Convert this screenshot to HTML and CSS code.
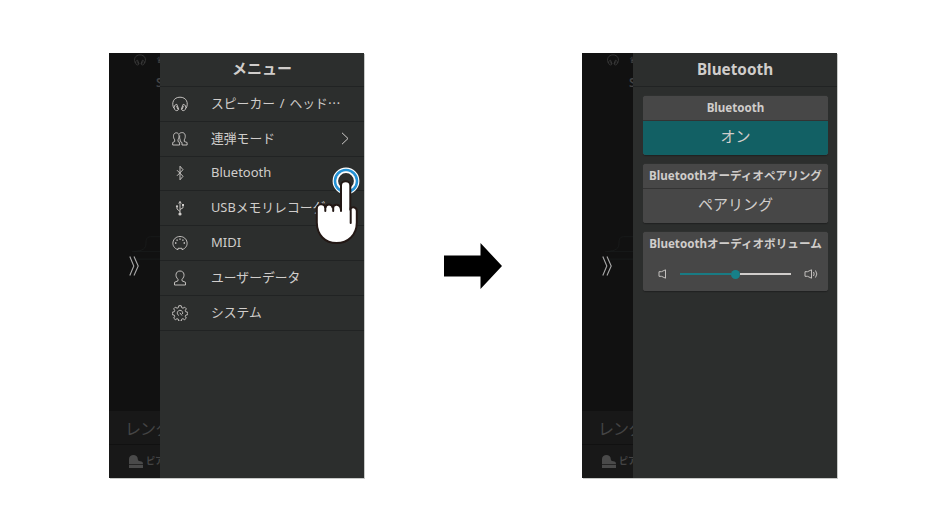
FILE: index.html
```html
<!DOCTYPE html>
<html lang="ja">
<head>
<meta charset="utf-8">
<title>Bluetooth</title>
<link rel="stylesheet" href="styles.css">
</head>
<body>
<svg class="defs" width="0" height="0">
  <symbol id="headphones" viewBox="0 0 16 16"><path d="M1.800 12.200C-.8 7 1.500 1.200 8 1.200S16.800 7 14.200 12.200M2.600 13.300C1.500 11 2.600 8.500 4.800 8.300L6.700 13.200C6 15 3.500 15.200 2.600 13.300ZM4.600 10l1.300 3.300M13.400 13.300C14.500 11 13.400 8.500 11.200 8.300L9.300 13.200C10 15 12.500 15.200 13.400 13.300ZM11.400 10l-1.300 3.300"/></symbol>
  <symbol id="piano" viewBox="0 0 14 13"><path d="M0 9V4C0-1.300 8.800-1.300 8.800 4c0 1.800 1 2.200 2.500 2.200 1.800 0 2.700 1 2.700 2.800Z M0 9.700h14V13H0Z"/></symbol>
  <symbol id="dock" viewBox="0 0 52 30"><path d="M20 20c12-1 15-4 15-10 0-5 1-8 6-8h11M18 20h34M22 29h30"/></symbol>
  <symbol id="chevrons" viewBox="0 0 10 20"><path d="m.8.500 4 9.500-4 9.500M5 .5 9.200 10 5 19.500"/></symbol>
</svg>
<main class="stage">
  <section class="phone">
    <div class="backdrop">
      <div class="status"><svg class="line s12"><use href="#headphones"/></svg><span class="pair">♛</span></div>
      <div class="song">S</div>
      <svg class="dock"><use href="#dock"/></svg>
      <svg class="chevrons"><use href="#chevrons"/></svg>
      <div class="lesson">レンタ</div>
      <div class="voice"><svg class="piano"><use href="#piano"/></svg><span>ピア</span></div>
    </div>
    <div class="drawer">
      <h1 class="title">メニュー</h1>
      <ul class="menu">
        <li><svg class="line icon"><use href="#headphones"/></svg><span class="wide">スピーカー / ヘッド⋯</span></li>
        <li><svg class="line icon" viewBox="0 0 16 16"><path d="M.7 14v-2.500l2-1V8.800C.8 6.500 1 1.800 4.300 1.800S7.500 6 6 8.800v1.700l1.600 1V14ZM7.300 2.800C8.300 1.800 9 1.600 10.300 1.600c3.200 0 3.700 4.400 2 7.200v1.700l2.800 1V14H10v-2.500l-1.800-1V8.800C7.500 7.500 7.500 6 7.800 4.500"/></svg><span>連弾モード</span><svg class="next" viewBox="0 0 8 13"><path d="m1 .8 6 5.700-6 5.700"/></svg></li>
        <li><svg class="line icon" viewBox="0 0 16 16"><path d="M5 5.200 11 11.300 8 14.800V1.200l3 3.500L5 10.800"/></svg><span class="latin">Bluetooth</span></li>
        <li><svg class="line icon" viewBox="0 0 16 16"><path d="M8 13V1.500M6.700 3.500 8 1.500l1.300 2M8 11.500 5 9V6.500M8 9.500l3-1.700V5"/><circle class="solid" cx="8" cy="14" r="1.600"/><circle class="solid" cx="5" cy="6.300" r="1.100"/><path class="solid" d="M10 4h2v2h-2Z"/></svg><span>USBメモリレコーダー</span></li>
        <li><svg class="line icon" viewBox="0 0 16 16"><path d="M6 14.700C-2.200 12 .2 1.500 8 1.500s10.200 10.500 2 13.200v-1.400H6Z"/><path class="solid" d="M3 7.300h1.400v1.400H3ZM4.400 4.400h1.400v1.400H4.400ZM7.300 3.400h1.400v1.400H7.300ZM10.200 4.400h1.400v1.400h-1.400ZM11.600 7.300H13v1.400h-1.400Z"/></svg><span class="latin">MIDI</span></li>
        <li><svg class="line icon" viewBox="0 0 16 16"><path d="M2.500 15v-2.700L6 10.800V9.300C2.700 6.500 3.500 1 8 1s5.300 5.500 2 8.300v1.500l3.500 1.500V15Z"/></svg><span>ユーザーデータ</span></li>
        <li><svg class="line icon" viewBox="0 0 16 16"><path d="m6.800.7 2.400 0 .5 2 1.300.5 1.700-1 1.600 1.600-1 1.800.5 1.200 2 .5v2.300l-2 .5-.5 1.300 1 1.700-1.600 1.600-1.800-1-1.200.5-.5 2H6.800l-.5-2-1.300-.5-1.700 1-1.600-1.600 1-1.800-.5-1.200-2-.5V7.300l2-.5.500-1.300-1-1.700 1.600-1.600 1.800 1 1.200-.5Z"/><path d="M6.800 10.500C4 8.800 5.500 5.300 8 5.300c2 0 3.200 1.900 2.500 3.700M7.800 7.800l2.200 2.700"/></svg><span>システム</span></li>
      </ul>
    </div>
    <svg class="tap" viewBox="0 0 46 80">
      <circle cx="31" cy="16" r="11.500" fill="none" stroke="#fff" stroke-width="3.800"/>
      <circle cx="31" cy="16" r="11" fill="none" stroke="#2492d5" stroke-width="2.600"/>
      <circle cx="31" cy="16" r="8.800" fill="none" stroke="#fff" stroke-width="1.800"/>
      <path d="M26 45V20.500c0-5.700 9.300-5.700 9.300 0v23c2.500-2.200 6.500-1.500 6.500 2.500v11.500C41.800 70 33 78 21.500 78S2 70 1.800 57.500V44c0-6 8-6 8.500-1 .5-4.500 6.700-4.800 7.500 0 .8-4.700 7.500-4.800 8.200 2Z" fill="#fff" stroke="#231815" stroke-width="2"/>
      <path d="M10.300 42v4M18.200 42v4M26 42v4M35.700 43v15" fill="none" stroke="#231815" stroke-width="2" stroke-linecap="round"/>
    </svg>
  </section>
  <svg class="arrow" viewBox="0 0 58 46"><path d="M0 12.500h36.500V0L58 23 36.500 46V33.500H0Z"/></svg>
  <section class="phone settings">
    <div class="backdrop">
      <div class="status"><svg class="line s12"><use href="#headphones"/></svg><span class="pair">♛</span></div>
      <div class="song">S</div>
      <svg class="dock"><use href="#dock"/></svg>
      <svg class="chevrons"><use href="#chevrons"/></svg>
      <div class="lesson">レンタ</div>
      <div class="voice"><svg class="piano"><use href="#piano"/></svg><span>ピア</span></div>
    </div>
    <div class="drawer">
      <h1 class="title">Bluetooth</h1>
      <div class="cards">
        <div class="card"><h2>Bluetooth</h2><div class="action on">オン</div></div>
        <div class="card"><h2>Bluetoothオーディオペアリング</h2><div class="action">ペアリング</div></div>
        <div class="card"><h2 class="plain">Bluetoothオーディオボリューム</h2>
          <div class="volume">
            <svg class="speaker" viewBox="0 0 9 10"><path d="M3.500 2.700H1v4.600h2.500M3.500 2.700 7.500.8v8.400L3.500 7.300"/></svg>
            <div class="track"><div class="fill"></div><div class="knob"></div><div class="rest"></div></div>
            <svg class="speaker loud" viewBox="0 0 14 10"><path d="M3.500 2.700H1v4.600h2.500M3.500 2.700 7.500.8v8.400L3.500 7.300M9.500 3q1.300 2 0 4M11.500 1.500q2.700 3.500 0 7"/></svg>
          </div>
        </div>
      </div>
    </div>
  </section>
</main>
</body>
</html>
```
FILE: styles.css
```css
* { box-sizing: border-box; }
body { margin: 0; background: #fff; font-family: "Noto Sans", "Noto Sans CJK JP", sans-serif; color: #d0cdcb; }
.defs { position: absolute; }
svg { display: block; flex: none; }
.stage { display: flex; width: 946px; height: 532px; padding: 53px 109px 0; }
.phone { position: relative; display: flex; width: 255px; height: 425px; flex: none; background: #2c2e2d; box-shadow: 1px 1px 0 #c8cac8; }
.backdrop { position: relative; width: 51px; height: 425px; overflow: hidden; flex: none; background: #111; color: #444; white-space: nowrap; }
.status { display: flex; gap: 10px; height: 22px; padding: 1px 0 0 25px; }
.line { fill: none; stroke: currentColor; stroke-width: .9; stroke-linejoin: round; }
.s12 { width: 12px; height: 12px; }
.pair { font: 9px/12px "DejaVu Sans", sans-serif; }
.song { padding-left: 47px; font-size: 12px; line-height: 16px; font-weight: 600; }
.dock { position: absolute; left: 8px; top: 182px; width: 43px; height: 25px; fill: none; stroke: #1a1c1c; }
.chevrons { position: absolute; left: 20px; top: 203px; width: 10px; height: 20px; fill: none; stroke: #aaa; stroke-width: 1.100; }
.lesson { height: 34px; margin-top: 320px; padding-left: 16px; font-size: 16px; line-height: 36px; letter-spacing: -1px; background: #181818; border-bottom: 1px solid #111; }
.voice { display: flex; gap: 3px; align-items: center; height: 33px; padding-left: 20px; font-size: 9px; background: #181818; }
.voice span { margin-top: -2px; font-weight: 600; }
.piano { width: 14px; height: 13px; fill: #4a4a4a; }
.drawer { width: 204px; flex: none; }
.title { height: 34px; margin: 0; border-bottom: 1px solid #212323; font-size: 15px; line-height: 31px; text-align: center; }
.menu { margin: 0; padding: 0; list-style: none; }
.menu li { display: flex; align-items: center; height: 34.800px; padding-left: 12px; border-bottom: 1px solid #212323; font-size: 12.800px; line-height: 20px; white-space: nowrap; }
.menu span { margin-left: 23px; margin-top: -2px; }
.menu .latin { font-size: 13px; }
.menu .wide { word-spacing: 1.500px; }
.icon { width: 16px; height: 16px; }
.solid { fill: currentColor; stroke: none; }
.next { width: 8px; height: 13px; margin-left: auto; margin-right: 15px; fill: none; stroke: currentColor; }
.tap { position: absolute; left: 205.500px; top: 111.500px; width: 46px; height: 80px; }
.arrow { width: 58px; height: 46px; margin: 190px 80px 0; fill: #000; }
.settings .title { font-size: 15.300px; line-height: 32px; }
.cards { display: flex; flex-direction: column; gap: 9px; padding: 8.500px 9px 0 10px; }
.card { height: 59.300px; overflow: hidden; border-radius: 3px; background: #474747; box-shadow: 0 0 1px #555, 0 1px 1px #1b1c1c; }
.card h2 { height: 25.500px; margin: 0; border-bottom: 1px solid #333; font-size: 11.600px; line-height: 23px; text-align: center; white-space: nowrap; }
.card .plain { border: 0; }
.action { height: 34px; font-size: 15px; line-height: 31px; text-align: center; }
.on { background: #126064; }
.volume { display: flex; align-items: center; height: 33px; padding: 0 10px 0 15px; }
.speaker { width: 9px; height: 10px; fill: none; stroke: currentColor; stroke-width: .9; }
.loud { width: 14px; }
.track { display: flex; align-items: center; flex: 1; margin: 0 13px; }
.fill { flex: 1; height: 2px; background: #197b84; }
.rest { flex: 1; height: 2px; background: #d0cdcb; }
.knob { width: 9px; height: 9px; border-radius: 50%; background: #178089; }
```
